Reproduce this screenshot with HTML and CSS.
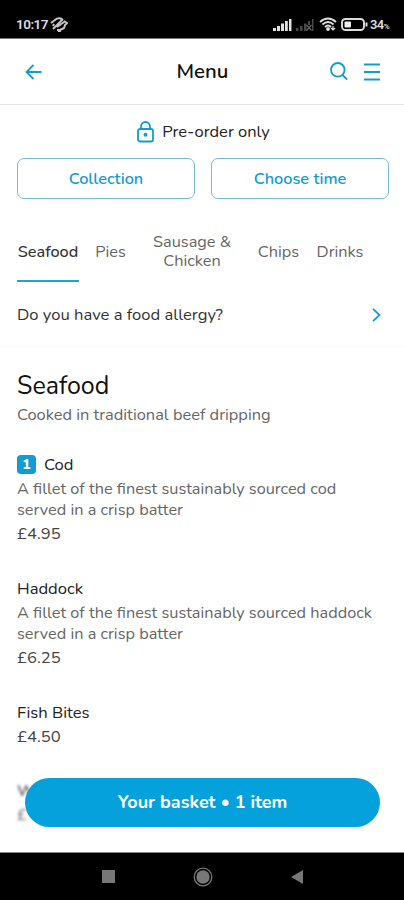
FILE: index.html
```html
<!DOCTYPE html>
<html lang="en">
<head>
<meta charset="utf-8">
<title>Menu</title>
<link rel="stylesheet" href="styles.css">
</head>
<body>
<div class="phone">
  <div class="status">
    <div class="clock"><span>10:17</span>
      <svg width="18" height="15" viewBox="0 0 18 15" fill="none" stroke="#c4c4c4" stroke-width="2" stroke-linejoin="round"><path d="M1 6L5 3Q8 0 12 2M14 4L17 6L15 8L14 11L10 13H7M3 12L13 2M7 10L14 5M4 7L3 9M8 14h3"/></svg>
    </div>
    <div class="signals">
      <svg class="bars" width="19" height="13" viewBox="0 0 19 13" fill="#e2e2e2"><path d="M0 10h3v3H0zM4 8h3v5H4zM8 5.500h3V13H8zM12 3h2.800v10H12zM16 1h2.500v12H16z"/></svg>
      <svg class="bars-off" width="18" height="13" viewBox="0 0 18 13" fill="#484848"><path d="M0 10h2.500v3H0zM4 8h2.500v5H4zM8 5.500h2.500V13H8zM12 3h2v4h-2zM16 1h1.500v12H16z"/><path d="M10.500 7l5 5.500m0-5.500l-5 5.500" stroke="#666" stroke-width="1.200"/></svg>
      <svg class="wifi" width="18" height="14" viewBox="0 0 18 14" fill="none" stroke="#ddd" stroke-width="1.900"><path d="M1 5Q9-2 17 5M3.500 7.500Q9 2.500 14.500 7.500M6 10Q9 7 12 10"/><circle cx="9" cy="12" r="1" fill="#ddd"/><path d="M14 9v4m-2-2l2 2 2-2" stroke-width="1.200"/></svg>
      <svg class="battery" width="27" height="13" viewBox="0 0 27 13"><rect x="1" y="1" width="22" height="11" rx="3.500" fill="none" stroke="#ddd" stroke-width="1.900"/><rect x="3.500" y="3.500" width="6.500" height="6" rx="1" fill="#eee"/><path d="M24.500 4.500h2v4h-2z" fill="#ddd"/></svg>
      <span class="pct">34<small>%</small></span>
    </div>
  </div>
  <header class="header">
    <svg class="back" width="18" height="16" viewBox="0 0 18 16"><path d="M16.500 8H1.500M8.500 1L1.500 8l7 7"/></svg>
    <h1>Menu</h1>
    <div class="actions">
      <svg width="18" height="19" viewBox="0 0 18 19"><circle cx="7.800" cy="7.800" r="6.800"/><path d="M12.500 13l4.700 4.700"/></svg>
      <svg width="16" height="18" viewBox="0 0 16 18"><path d="M0 1.500h16M0 9h16M0 16.500h16"/></svg>
    </div>
  </header>
  <main>
    <div class="preorder">
      <svg width="17" height="22" viewBox="0 0 17 22"><rect x="1" y="8" width="15" height="12.500" rx="2"/><path d="M4 8V5.500a4.500 4.500 0 0 1 9 0V8"/><circle cx="8.500" cy="13.800" r="1.100"/></svg>
      <span>Pre-order only</span>
    </div>
    <div class="buttons"><button>Collection</button><button>Choose time</button></div>
    <nav class="tabs">
      <span class="tab active">Seafood</span>
      <span class="tab pies">Pies</span>
      <span class="tab sausage"><span>Sausage &amp; Chicken</span></span>
      <span class="tab chips">Chips</span>
      <span class="tab drinks">Drinks</span>
    </nav>
    <div class="allergy"><span>Do you have a food allergy?</span>
      <svg width="9" height="14" viewBox="0 0 9 14"><path d="M1 .8L7.500 7 1 13.200"/></svg>
    </div>
    <section>
      <h2>Seafood</h2>
      <p class="sub">Cooked in traditional beef dripping</p>
      <article>
        <h3><span class="qty">1</span><span>Cod</span></h3>
        <p class="desc">A fillet of the finest sustainably sourced cod<br>served in a crisp batter</p>
        <p class="price">£4.95</p>
      </article>
      <article>
        <h3>Haddock</h3>
        <p class="desc">A fillet of the finest sustainably sourced haddock<br>served in a crisp batter</p>
        <p class="price">£6.25</p>
      </article>
      <article>
        <h3>Fish Bites</h3>
        <p class="price">£4.50</p>
      </article>
      <article class="faded">
        <h3>W</h3>
        <p class="price">£</p>
      </article>
    </section>
    <button class="basket">Your basket • 1 item</button>
  </main>
  <footer class="navbar">
    <svg width="13" height="13" viewBox="0 0 13 13"><path d="M0 0h13v13H0z" fill="#777"/></svg>
    <svg width="20" height="20" viewBox="0 0 20 20"><circle cx="10" cy="10" r="8.800" fill="none" stroke="#777" stroke-width="1.300"/><circle cx="10" cy="10" r="6.700" fill="#777"/></svg>
    <svg width="12" height="14" viewBox="0 0 12 14"><path d="M12 0v14L0 7z" fill="#777"/></svg>
  </footer>
</div>
</body>
</html>
```
FILE: styles.css
```css
* { box-sizing: border-box; }
body, h1, h2, h3, p { margin: 0; font-weight: 400; }
body { font-family: Nunito, Lato, sans-serif; font-size: 16.3px; color: #333; background: #fff; }
svg { display: block; flex: none; }
.phone { width: 404px; height: 900px; display: flex; flex-direction: column; overflow: hidden; }
.status { height: 39px; flex: none; background: #000; border-bottom: 1px solid #777; display: flex; justify-content: space-between; padding: 10px 15px 0 16px; color: #ddd; }
.clock { display: flex; align-items: center; gap: 2px; height: 28px; font: 600 13.5px Roboto, sans-serif; letter-spacing: -.5px; }
.signals { display: flex; align-items: center; height: 28px; }
.bars { margin-right: 4px; }
.bars-off { margin-right: 5px; }
.wifi { margin-right: 4px; }
.battery { margin-right: 2px; }
.pct { font: 600 13px Roboto, sans-serif; letter-spacing: -.6px; }
.pct small { font-size: 8px; }
.header { height: 66px; flex: none; border-bottom: 1px solid #e4e4e4; display: grid; grid-template-columns: 1fr auto 1fr; align-items: center; padding: 0 24px 0 25px; }
.header svg, .preorder svg, .allergy svg { fill: none; stroke: #149bd2; stroke-width: 1.8; }
.header h1 { font-size: 20.4px; font-weight: 600; color: #111; transform: translateY(-1px); }
.actions { display: flex; justify-content: flex-end; align-items: center; gap: 16px; }
main { height: 747px; flex: none; position: relative; overflow: hidden; }
.preorder { height: 53px; display: flex; align-items: center; justify-content: center; gap: 8px; padding-left: 3px; color: #222; font-size: 16.5px; }
.buttons { display: grid; grid-template-columns: 178px 178px; gap: 16px; padding-left: 17px; }
.buttons button { height: 41px; border: 1px solid #72bdd5; border-radius: 7px; background: #fff; color: #149bd2; font: 600 16.3px Nunito, Lato, sans-serif; padding: 0; }
.tabs { height: 83px; display: flex; padding: 23px 0 0 17px; line-height: 19px; color: #666; }
.tab { height: 60px; display: flex; align-items: center; justify-content: center; text-align: center; flex: none; }
.active { width: 62px; color: #333; border-bottom: 2px solid #28a0d0; padding-top: 2px; font-weight: 500; }
.pies { width: 31px; margin-left: 16px; }
.sausage { width: 82px; margin-left: 25px; }
.chips { width: 43px; margin-left: 24px; }
.drinks { width: 48px; margin-left: 16px; }
.allergy { height: 65px; border-bottom: 1px solid #fafafa; display: flex; align-items: center; justify-content: space-between; padding: 1px 23px 0 17px; font-size: 16.6px; }
section { padding: 21px 0 0 17px; white-space: nowrap; }
h2 { font-size: 25px; line-height: 36px; color: #111; }
.sub { line-height: 22px; height: 49px; color: #666; font-size: 16.4px; }
article { margin-bottom: 30px; }
article:first-of-type { margin-top: -1px; }
h3 { font-size: 16.6px; line-height: 24px; height: 25px; color: #222; display: flex; align-items: center; }
.qty { width: 19px; height: 19px; border-radius: 4px; background: #149bd2; color: #fff; font: 800 14px/19px Nunito, Lato, sans-serif; text-align: center; margin-right: 8px; }
.desc { margin-top: 2px; line-height: 20.5px; color: #666; height: 43px; }
.price { line-height: 24px; height: 24px; color: #444; font-size: 16.6px; }
.faded { filter: blur(1.8px); opacity: .8; }
.faded h3 { font-weight: 600; margin-top: -1px; }
.basket { position: absolute; left: 25px; top: 673px; width: 355px; height: 49px; border: 0; border-radius: 25px; background: #04a1dc; color: #fff; font: 700 18px Nunito, Lato, sans-serif; padding-bottom: 3px; }
.navbar { height: 48px; flex: none; background: #000; border-top: 1px solid #888; display: flex; align-items: center; padding-left: 102px; gap: 78px; }
```
